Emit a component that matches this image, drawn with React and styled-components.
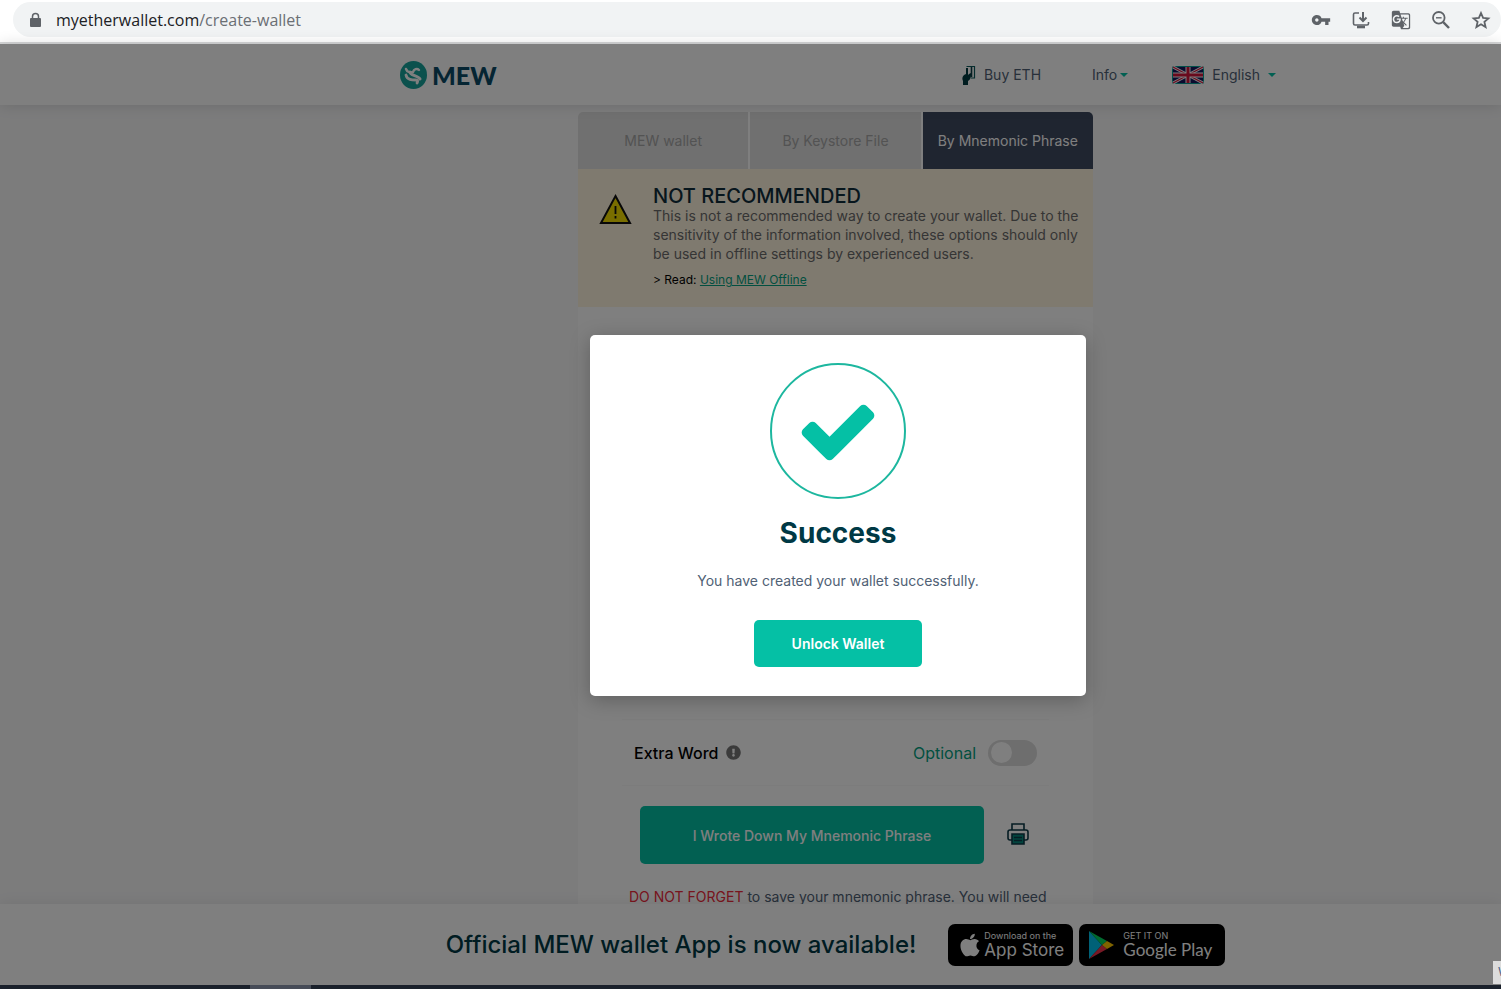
import styled, { createGlobalStyle, css } from "styled-components"
import { MdVpnKey, MdGTranslate } from "react-icons/md"
import { FaApple, FaExclamationCircle } from "react-icons/fa"

const GlobalStyle = createGlobalStyle`
  * {
    box-sizing: border-box;
  }
  body {
    margin: 0;
    font-family: Inter, "Open Sans", sans-serif;
    font-size: 14px;
    color: #506175;
  }
  h1, h2, p {
    margin: 0;
  }
  button {
    border: 0;
    padding: 0;
    background: none;
    font: inherit;
    color: inherit;
    cursor: pointer;
  }
`

/* browser */
const Screen = styled.div`
  display: flex;
  flex-direction: column;
  height: 100vh;
  overflow: hidden;
`

const Toolbar = styled.div`
  flex: none;
  padding: 2px 0 5px 13px;
  background: #fff;
  border-bottom: 2px solid #d6d7d8;
`

const AddressBar = styled.div`
  display: flex;
  align-items: center;
  gap: 13px;
  height: 35px;
  padding: 0 10px 0 15px;
  border-radius: 18px;
  background: #f1f3f4;
  color: #5f6368;
`

const Url = styled.span`
  flex: 1;
  font-family: "Open Sans", sans-serif;
  font-size: 16px;
  color: #6b6f74;

  b {
    font-weight: 400;
    color: #202124;
  }
`

const BarButtons = styled.div`
  display: flex;
  gap: 20px;

  button {
    display: flex;
  }
`

const Taskbar = styled.div`
  flex: none;
  height: 4px;
  padding-left: 250px;
  background: #1b222d;
`

const TaskbarItem = styled.div`
  width: 61px;
  height: 4px;
  background: #4a4f5b;
`

/* site */
const Site = styled.div`
  position: relative;
  flex: 1;
  min-height: 0;
  display: flex;
  flex-direction: column;
  background: #f8f8f9;
`

const Header = styled.header`
  flex: none;
  z-index: 1;
  display: flex;
  justify-content: center;
  height: 61px;
  padding-left: 175px;
  background: #fff;
  box-shadow: 0 0 14px rgba(0, 0, 0, 0.14);
`

const HeaderInner = styled.div`
  display: flex;
  align-items: center;
  justify-content: space-between;
  width: 876px;
`

const Logo = styled.a`
  display: flex;
  align-items: center;
  gap: 5px;
  font-family: Lato, sans-serif;
  font-size: 25px;
  font-weight: 900;
  line-height: 28px;
  color: #0b4a66;
  text-decoration: none;
`

const Nav = styled.nav`
  display: flex;
  align-items: center;
`

const NavItem = styled.button`
  display: flex;
  align-items: center;
  gap: ${props => props.$gap}px;
  margin-left: ${props => props.$space || 0}px;
  font-size: 14px;
  line-height: 20px;
`

const Caret = styled.span`
  border: 4px solid transparent;
  border-top-color: #05c0a5;
  border-bottom: 0;
`

const Main = styled.main`
  flex: 1;
  min-height: 0;
  overflow: hidden;
  display: flex;
  justify-content: center;
  padding: 7px 0 0 170px;
`

const Panel = styled.div`
  width: 515px;
`

const Tabs = styled.div`
  display: grid;
  grid-template-columns: repeat(3, 1fr);
  gap: 2px;
  border-radius: 5px 5px 0 0;
  overflow: hidden;
  background: #fff;
`

const Tab = styled.button`
  height: 57px;
  font-size: 14px;
  white-space: nowrap;
  background: #e0e0e0;
  color: #a6a6a6;

  ${props => props.$active && css`
    background: #3e4a60;
    color: #fff;
  `}
`

const Warning = styled.section`
  display: flex;
  gap: 21px;
  height: 138px;
  padding: 18px 10px 0 21px;
  background: #fff4de;

  svg {
    flex: none;
    margin-top: 6px;
  }
`

const WarningTitle = styled.h2`
  font-size: 20px;
  font-weight: 500;
  line-height: 19px;
  color: #0f2c3b;
`

const WarningText = styled.p`
  line-height: 19px;
  color: #6b6b6b;
`

const WarningRead = styled.p`
  margin-top: 9px;
  font-size: 12px;
  line-height: 16px;
  color: #000;

  a {
    color: #05a081;
  }
`

const PanelBody = styled.div`
  padding: 412px 44px 0;
  background: #fff;
`

const ExtraWord = styled.div`
  display: flex;
  align-items: center;
  justify-content: space-between;
  height: 67px;
  padding: 0 12px;
  border: solid #f8f8f8;
  border-width: 1px 0;
  font-size: 16px;
`

const ExtraTitle = styled.div`
  display: flex;
  align-items: center;
  gap: 8px;
  font-weight: 500;
  color: #000;

  svg {
    color: #777;
  }
`

const Switch = styled.label`
  display: flex;
  align-items: center;
  gap: 12px;
  color: #05a081;

  input {
    appearance: none;
    display: flex;
    align-items: center;
    width: 49px;
    height: 26px;
    margin: 0;
    padding: 0 3px;
    border-radius: 13px;
    background: #dcdcdc;
  }
  input::before {
    content: "";
    width: 21px;
    height: 21px;
    border-radius: 50%;
    background: #fff;
  }
  input:checked {
    justify-content: flex-end;
    background: #05c0a5;
  }
`

const Actions = styled.div`
  display: flex;
  align-items: center;
  justify-content: space-between;
  padding: 20px 20px 0 18px;
`

const GreenButton = styled.button`
  width: ${props => props.$width}px;
  height: ${props => props.$height}px;
  border-radius: 5px;
  background: #05c0a5;
  color: #fff;
  font-weight: ${props => props.$weight};
`

const Reminder = styled.p`
  padding: 23px 0 0 7px;
  line-height: 20px;

  span {
    color: #f02a3c;
  }
`

const Footer = styled.footer`
  flex: none;
  z-index: 1;
  display: flex;
  align-items: center;
  justify-content: center;
  gap: 32px;
  height: 81px;
  padding-left: 170px;
  background: #fff;
  box-shadow: 0 0 14px rgba(0, 0, 0, 0.08);
`

const FooterTitle = styled.h2`
  font-size: 24px;
  font-weight: 500;
  color: #003945;
`

const Stores = styled.div`
  display: flex;
  gap: 6px;
`

const Store = styled.a`
  display: flex;
  align-items: center;
  gap: ${props => props.$gap}px;
  width: ${props => props.$width}px;
  height: 42px;
  padding-left: 9px;
  border-radius: 7px;
  background: #000;
  color: #fff;
  text-decoration: none;
  white-space: nowrap;
`

const StoreText = styled.span`
  display: flex;
  flex-direction: column;
  font-family: ${props => props.$font || "inherit"};
  font-size: ${props => props.$size}px;
  line-height: 18px;

  small {
    font-family: Inter, sans-serif;
    font-size: 9px;
    line-height: 10px;
  }
`

/* modal */
const Overlay = styled.div`
  position: absolute;
  inset: 0;
  z-index: 2;
  display: flex;
  align-items: center;
  justify-content: center;
  padding: 2px 0 0 175px;
  background: rgba(0, 0, 0, 0.5);
`

const Modal = styled.div`
  display: flex;
  flex-direction: column;
  align-items: center;
  width: 496px;
  padding: 28px 20px 29px;
  border-radius: 5px;
  background: #fff;
  box-shadow: 0 4px 20px rgba(0, 0, 0, 0.25);
`

const CheckCircle = styled.div`
  display: flex;
  align-items: center;
  justify-content: center;
  width: 136px;
  height: 136px;
  border: 2px solid #1db79f;
  border-radius: 50%;
`

const ModalTitle = styled.h1`
  margin-top: 16px;
  font-size: 28px;
  font-weight: 700;
  line-height: 36px;
  color: #003945;
`

const ModalText = styled.p`
  margin: 20px 0 29px;
  line-height: 20px;
`

const LinkTip = styled.div`
  position: absolute;
  right: 0;
  bottom: 1px;
  z-index: 3;
  width: 8px;
  height: 23px;
  padding-left: 5px;
  overflow: hidden;
  background: #dcdcdc;
  color: #4a5d80;
  font-size: 12px;
  line-height: 22px;
`

const LockIcon = () => (
  <svg width="15" height="16" viewBox="0 0 15 16">
    <path d="M4.500 7V4.500a3 3 0 0 1 6 0V7" fill="none" stroke="#5f6368" strokeWidth="1.500" />
    <rect x="2" y="6" width="11" height="9" rx="1" fill="#5f6368" />
  </svg>
)

const InstallIcon = () => (
  <svg width="20" height="20" viewBox="0 0 20 20" fill="none" stroke="#5f6368" strokeWidth="1.600">
    <path d="M8 3H4c-1 0-1.500.5-1.500 1.500v9c0 1 .5 1.500 1.500 1.500h12c1 0 1.500-.5 1.500-1.500V12" />
    <path d="M12 2v8.500M8.500 7.500l3.500 3.500 3.500-3.500" strokeWidth="2" />
    <path d="M6 17h8" strokeWidth="2.600" />
  </svg>
)

const ZoomIcon = () => (
  <svg width="20" height="20" viewBox="0 0 20 20" fill="none" stroke="#5f6368" strokeWidth="1.800">
    <circle cx="7.800" cy="7.800" r="5.800" />
    <path d="M12.200 12.200l5.800 5.800" strokeWidth="2.400" />
    <path d="M5 7.800h5.600" strokeWidth="1.400" />
  </svg>
)

const StarIcon = () => (
  <svg width="20" height="20" viewBox="0 0 20 20" fill="none" stroke="#5f6368" strokeWidth="1.800">
    <path d="M10 3l2.100 4.900 5.300.5-4 3.500 1.200 5.200-4.600-2.800-4.600 2.800 1.200-5.200-4-3.500 5.300-.5z" />
  </svg>
)

const LogoIcon = () => (
  <svg width="27" height="28" viewBox="0 0 27 28" fill="none" stroke="#fff" strokeLinecap="round">
    <ellipse cx="13.500" cy="14" rx="13.500" ry="14" fill="#17a29b" stroke="none" />
    <path d="M6 8c1 3 4 4 7 3 1-3 4-4 6-2" strokeWidth="2.400" />
    <path d="M10 11c0 4 8 3 10 7" strokeWidth="3" />
    <path d="M6 14c1 5 6 5 10 5 2 0 2 1 1 3" strokeWidth="2.800" />
  </svg>
)

const BuyIcon = () => (
  <svg width="14" height="20" viewBox="0 0 14 20">
    <path d="M4.500 1.500h8V13H9" fill="none" stroke="#0c5b5d" strokeWidth="1.200" />
    <path d="M9.500 2v10" stroke="#0c3c44" strokeWidth="1.600" />
    <path d="M4 3v6l-2 1c-2 2-2 4-1 6v4h5v-4c2-1 3-3 3-6V8L7 9l-1 1V3z" fill="#003a40" />
  </svg>
)

const FlagIcon = () => (
  <svg width="32" height="18" viewBox="0 0 32 18">
    <rect width="32" height="18" rx="2" fill="#05a095" />
    <rect x="1" y="1" width="30" height="16" fill="#17175f" />
    <path d="M1 1l30 16M31 1L1 17" stroke="#fff" strokeWidth="3" />
    <path d="M1 1l30 16M31 1L1 17" stroke="#d2143a" strokeWidth="1.200" />
    <path d="M16 1v16M1 9h30" stroke="#fff" strokeWidth="5" />
    <path d="M16 1v16M1 9h30" stroke="#d2143a" strokeWidth="3" />
  </svg>
)

const WarningIcon = () => (
  <svg width="33" height="32" viewBox="0 0 33 32">
    <path d="M16.500 3L31 30H2z" fill="#f2dc00" stroke="#111" strokeWidth="2" />
    <path d="M16.500 13v8M16.500 23v2.500" stroke="#111" strokeWidth="1.800" />
  </svg>
)

const CheckIcon = () => (
  <svg width="84" height="84" viewBox="0 0 1792 1792" fill="#05c0a5">
    <path d="M1671 566q0 40-28 68l-724 724-136 136q-28 28-68 28t-68-28l-136-136-362-362q-28-28-28-68t28-68l136-136q28-28 68-28t68 28l294 295 656-657q28-28 68-28t68 28l136 136q28 28 28 68z" />
  </svg>
)

const PrintIcon = () => (
  <svg width="22" height="22" viewBox="0 0 22 22" fill="none" stroke="#0c3a48" strokeWidth="1.600">
    <path d="M5 7V1h12v6" />
    <path d="M5 17H3c-1.200 0-2-.8-2-2V9c0-1.200.8-2 2-2h16c1.200 0 2 .8 2 2v6c0 1.200-.8 2-2 2h-2" />
    <path d="M5 11h12v10H5z" fill="#05887d" />
    <path d="M7 14.500h8M7 17.500h8" />
  </svg>
)

const PlayIcon = () => (
  <svg width="27" height="30" viewBox="0 0 27 30">
    <path d="M1 1v28l13-14z" fill="#00c3ee" />
    <path d="M1 1l18 10-5 4z" fill="#00d45f" />
    <path d="M1 29l18-10-5-4z" fill="#f0334b" />
    <path d="M19 11l7 4-7 4-5-4z" fill="#ffc800" />
  </svg>
)

function App() {
  return (
    <Screen>
      <GlobalStyle />
      <Toolbar>
        <AddressBar>
          <LockIcon />
          <Url><b>myetherwallet.com</b>/create-wallet</Url>
          <BarButtons>
            <button aria-label="Passwords"><MdVpnKey size={20} /></button>
            <button aria-label="Install"><InstallIcon /></button>
            <button aria-label="Translate"><MdGTranslate size={20} /></button>
            <button aria-label="Zoom"><ZoomIcon /></button>
            <button aria-label="Bookmark"><StarIcon /></button>
          </BarButtons>
        </AddressBar>
      </Toolbar>
      <Site>
        <Header>
          <HeaderInner>
            <Logo href="#"><LogoIcon />MEW</Logo>
            <Nav>
              <NavItem $gap={8}><BuyIcon />Buy ETH</NavItem>
              <NavItem $gap={3} $space={51}>Info<Caret /></NavItem>
              <NavItem $gap={8} $space={44}><FlagIcon />English<Caret /></NavItem>
            </Nav>
          </HeaderInner>
        </Header>
        <Main>
          <Panel>
            <Tabs>
              <Tab>MEW wallet</Tab>
              <Tab>By Keystore File</Tab>
              <Tab $active>By Mnemonic Phrase</Tab>
            </Tabs>
            <Warning>
              <WarningIcon />
              <div>
                <WarningTitle>NOT RECOMMENDED</WarningTitle>
                <WarningText>
                  This is not a recommended way to create your wallet. Due to the
                  sensitivity of the information involved, these options should only
                  be used in offline settings by experienced users.
                </WarningText>
                <WarningRead>&gt; Read: <a href="#">Using MEW Offline</a></WarningRead>
              </div>
            </Warning>
            <PanelBody>
              <ExtraWord>
                <ExtraTitle>Extra Word <FaExclamationCircle size={15} /></ExtraTitle>
                <Switch>Optional <input type="checkbox" /></Switch>
              </ExtraWord>
              <Actions>
                <GreenButton $width={344} $height={58} $weight={500}>
                  I Wrote Down My Mnemonic Phrase
                </GreenButton>
                <button aria-label="Print"><PrintIcon /></button>
              </Actions>
              <Reminder>
                <span>DO NOT FORGET</span> to save your mnemonic phrase. You will need
              </Reminder>
            </PanelBody>
          </Panel>
        </Main>
        <Footer>
          <FooterTitle>Official MEW wallet App is now available!</FooterTitle>
          <Stores>
            <Store href="#" $width={125} $gap={1}>
              <FaApple size={26} />
              <StoreText $size={17}><small>Download on the</small>App Store</StoreText>
            </Store>
            <Store href="#" $width={146} $gap={8}>
              <PlayIcon />
              <StoreText $size={17} $font="Lato, sans-serif"><small>GET IT ON</small>Google Play</StoreText>
            </Store>
          </Stores>
        </Footer>
        <Overlay>
          <Modal role="dialog" aria-labelledby="modal-title">
            <CheckCircle><CheckIcon /></CheckCircle>
            <ModalTitle id="modal-title">Success</ModalTitle>
            <ModalText>You have created your wallet successfully.</ModalText>
            <GreenButton $width={168} $height={47} $weight={600}>Unlock Wallet</GreenButton>
          </Modal>
        </Overlay>
        <LinkTip>W</LinkTip>
      </Site>
      <Taskbar><TaskbarItem /></Taskbar>
    </Screen>
  )
}

export default App
